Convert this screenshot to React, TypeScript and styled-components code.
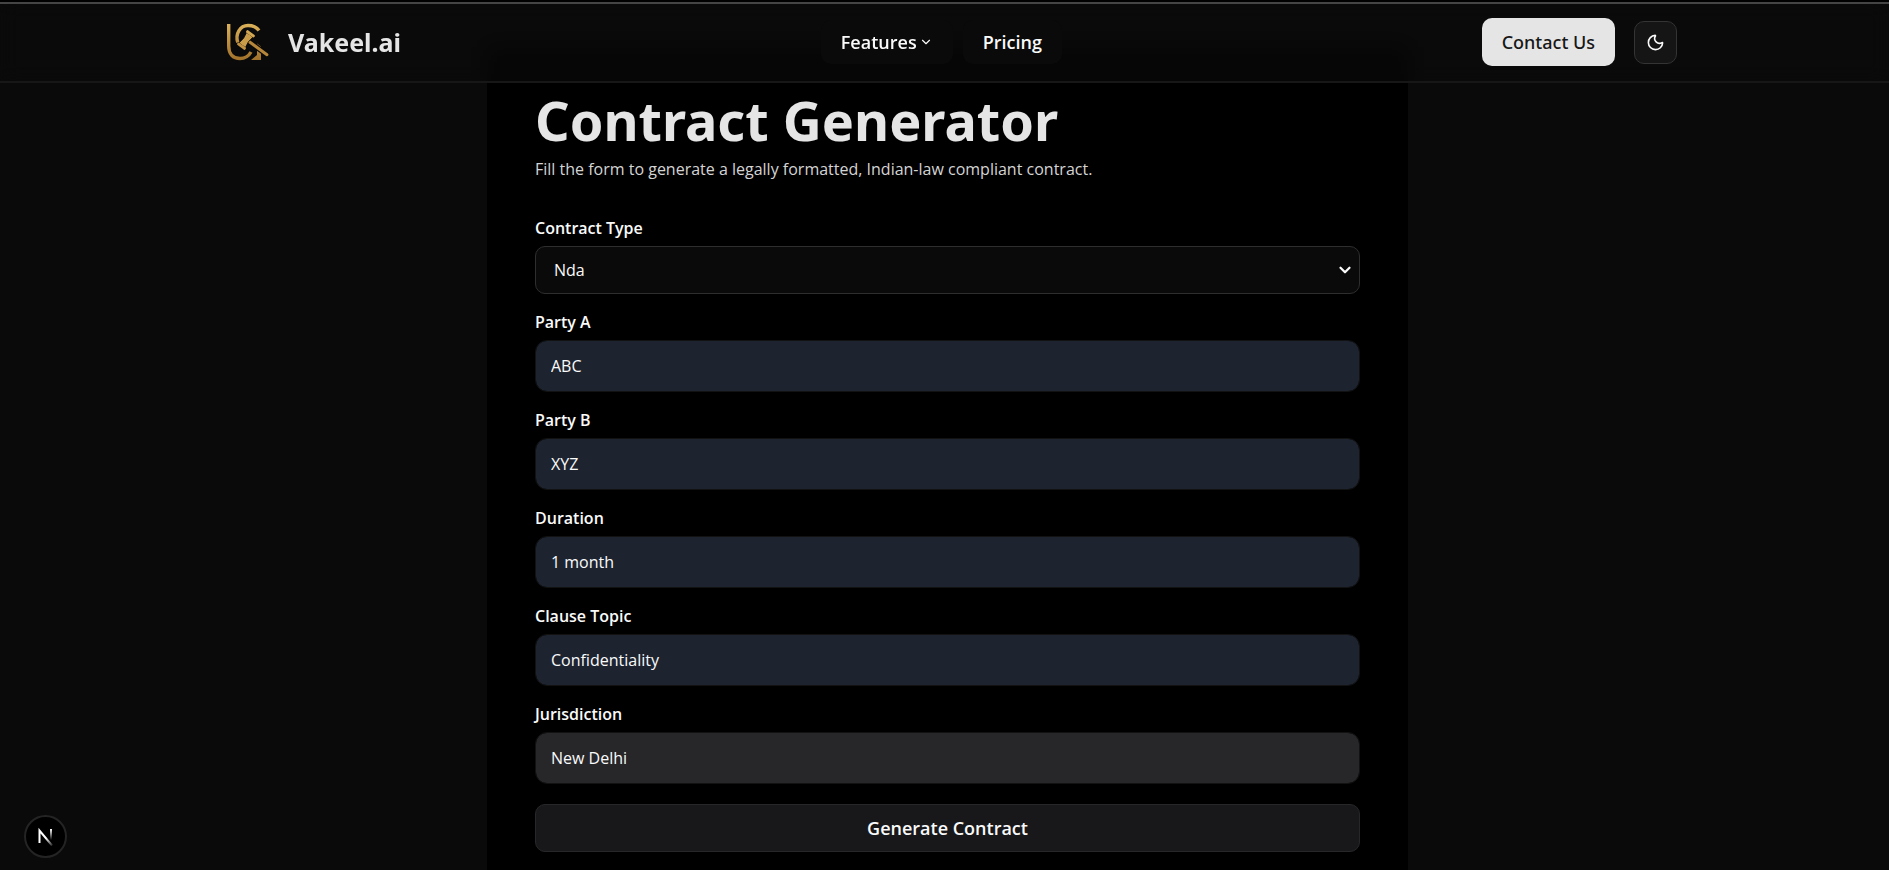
import React from 'react';
import styled, { createGlobalStyle } from 'styled-components';
import { ChevronDown, Moon } from 'lucide-react';

const GlobalStyle = createGlobalStyle`
  *, *::before, *::after { box-sizing: border-box; }
  body {
    margin: 0;
    background: #0a0a0a;
    color: #fafafa;
    font-family: "Open Sans", "Noto Sans", sans-serif;
    font-size: 16px;
    line-height: 24px;
  }
  button, input, select { font: inherit; color: inherit; }
`;

const Page = styled.div`
  display: flex;
  flex-direction: column;
  min-height: 100vh;
`;

const Header = styled.header`
  position: sticky;
  top: 0;
  z-index: 10;
  border-top: 2px solid #000;
  border-bottom: 2px solid #171717;
  background: rgba(10, 10, 10, 0.6);
  backdrop-filter: blur(10px);
`;

const HeaderInner = styled.div`
  display: flex;
  align-items: center;
  justify-content: space-between;
  height: 79px;
  padding: 0 212px 1px 218px;
  border-top: 2px solid #444;
`;

const Brand = styled.a`
  display: flex;
  align-items: center;
  gap: 10px;
  color: #e5e5e5;
  font-family: "Noto Sans", sans-serif;
  font-size: 25px;
  font-weight: 700;
  line-height: 32px;
  text-decoration: none;
`;

const Nav = styled.nav`
  display: flex;
  gap: 10px;
`;

const NavButton = styled.button`
  display: flex;
  align-items: center;
  gap: 2px;
  height: 44px;
  padding: 0 20px;
  border: 0;
  border-radius: 10px;
  background: #0a0a0a;
  font-size: 18px;
  font-weight: 600;
`;

const Actions = styled.div`
  display: flex;
  align-items: center;
  gap: 19px;
`;

const ContactButton = styled.button`
  height: 48px;
  padding: 0 20px;
  border: 0;
  border-radius: 10px;
  background: #e5e5e5;
  color: #171717;
  font-family: "Noto Sans", sans-serif;
  font-size: 18px;
  font-weight: 500;
`;

const ThemeButton = styled.button`
  display: grid;
  place-items: center;
  width: 43px;
  height: 43px;
  padding: 0;
  border: 1px solid #343434;
  border-radius: 10px;
  background: #151515;
`;

const Main = styled.main`
  display: flex;
  flex: 1;
  justify-content: center;
  margin-top: -36px;
  padding-left: 6px;
`;

const Card = styled.section`
  width: 100%;
  max-width: 921px;
  padding: 43px 48px 16px;
  background: #000;
`;

const Title = styled.h1`
  margin: 0;
  color: #e5e5e5;
  font-family: "Noto Sans", sans-serif;
  font-size: 54px;
  font-weight: 700;
  line-height: 60px;
`;

const Subtitle = styled.p`
  margin: 7px 0 35px;
  color: #d4d4d4;
`;

const Form = styled.form`
  display: flex;
  flex-direction: column;
  gap: 16px;
`;

const Field = styled.div`
  display: flex;
  flex-direction: column;
`;

const Label = styled.label`
  padding-bottom: 6px;
  font-weight: 600;
`;

const SelectWrap = styled.div`
  display: grid;
  align-items: center;

  > * { grid-area: 1 / 1; }
  svg { justify-self: end; margin-right: 6px; pointer-events: none; }
`;

const Select = styled.select`
  width: 100%;
  height: 48px;
  padding: 0 18px;
  border: 1px solid #2e2e2e;
  border-radius: 10px;
  background: #0a0a0a;
  appearance: none;
`;

const Input = styled.input<{ $autofilled?: boolean }>`
  width: 100%;
  height: 52px;
  padding: 0 15px;
  border: 1px solid #121213;
  border-radius: 12px;
  background: ${(p) => (p.$autofilled ? '#1d2430' : '#27272a')};
  background-clip: padding-box;
`;

const Submit = styled.button`
  height: 48px;
  margin-top: 4px;
  border: 1px solid #27272a;
  border-radius: 10px;
  background: #18181b;
  font-size: 18px;
  font-weight: 600;
`;

const DevBadge = styled.button`
  position: fixed;
  left: 24px;
  bottom: 12px;
  z-index: 20;
  display: grid;
  place-items: center;
  width: 43px;
  height: 43px;
  padding: 0;
  border: 2px solid #242424;
  border-radius: 50%;
  background: #000;
`;

function Logo() {
  return (
    <svg width="60" height="54" viewBox="-2 0 60 54" fill="none" aria-hidden="true">
      <defs>
        <linearGradient id="gold" x1="0" y1="8" x2="0" y2="46" gradientUnits="userSpaceOnUse">
          <stop offset="0" stopColor="#dcb45c" />
          <stop offset="0.5" stopColor="#bd8e3e" />
          <stop offset="1" stopColor="#a0702a" />
        </linearGradient>
      </defs>
      <g stroke="url(#gold)" strokeWidth="3.4">
        <path d="M8.700 9v22c0 8 4.300 12.500 11.300 12.500 5 0 8.500-2 11-6.500" />
        <path d="M17.800 27.500C15 19 20 10.500 28 10.500c5 0 8.500 1.500 11 5" />
      </g>
      <path d="M31 45l6-5V28.500l4 3V45z" fill="url(#gold)" />
      <path d="M29 26.500L47.500 40" stroke="#0a0a0a" strokeWidth="5.600" />
      <path d="M29 26.500L47 39.700" stroke="#b5853a" strokeWidth="3" strokeLinecap="round" />
      <g transform="translate(26 25) rotate(36)">
        <path d="M-4 -6.500H4L3 0L4 6.500H-4L-3 0z" fill="#c99c4a" stroke="#0a0a0a" strokeWidth="0.800" />
        <rect x="-5" y="-9" width="10" height="2.800" rx="1" fill="#d3a852" />
        <rect x="-5" y="6.200" width="10" height="2.800" rx="1" fill="#c09043" />
      </g>
    </svg>
  );
}

function NextMark() {
  return (
    <svg width="17" height="19" viewBox="0 0 17 19" fill="none" aria-hidden="true">
      <defs>
        <linearGradient id="stem" x1="0" y1="2" x2="0" y2="13" gradientUnits="userSpaceOnUse">
          <stop stopColor="#fff" />
          <stop offset="1" stopColor="#fff" stopOpacity="0" />
        </linearGradient>
        <linearGradient id="diag" x1="9" y1="11" x2="15" y2="18" gradientUnits="userSpaceOnUse">
          <stop stopColor="#fff" />
          <stop offset="1" stopColor="#fff" stopOpacity="0.200" />
        </linearGradient>
      </defs>
      <path d="M2.500 16V3.500L15 18.500" stroke="url(#diag)" strokeWidth="2" />
      <path d="M14 2v11" stroke="url(#stem)" strokeWidth="2" />
    </svg>
  );
}

const textFields = [
  { id: 'party-a', label: 'Party A', value: 'ABC', autofilled: true },
  { id: 'party-b', label: 'Party B', value: 'XYZ', autofilled: true },
  { id: 'duration', label: 'Duration', value: '1 month', autofilled: true },
  { id: 'clause-topic', label: 'Clause Topic', value: 'Confidentiality', autofilled: true },
  { id: 'jurisdiction', label: 'Jurisdiction', value: 'New Delhi', autofilled: false },
];

export default function App() {
  return (
    <Page>
      <GlobalStyle />
      <Header>
        <HeaderInner>
          <Brand href="#">
            <Logo />
            Vakeel.ai
          </Brand>
          <Nav>
            <NavButton type="button">
              Features
              <ChevronDown size={14} />
            </NavButton>
            <NavButton type="button">Pricing</NavButton>
          </Nav>
          <Actions>
            <ContactButton type="button">Contact Us</ContactButton>
            <ThemeButton type="button" aria-label="Toggle theme">
              <Moon size={19} />
            </ThemeButton>
          </Actions>
        </HeaderInner>
      </Header>
      <Main>
        <Card>
          <Title>Contract Generator</Title>
          <Subtitle>Fill the form to generate a legally formatted, Indian-law compliant contract.</Subtitle>
          <Form onSubmit={(e) => e.preventDefault()}>
            <Field>
              <Label htmlFor="contract-type">Contract Type</Label>
              <SelectWrap>
                <Select id="contract-type" defaultValue="nda">
                  <option value="nda">Nda</option>
                </Select>
                <ChevronDown size={18} strokeWidth={3} />
              </SelectWrap>
            </Field>
            {textFields.map((f) => (
              <Field key={f.id}>
                <Label htmlFor={f.id}>{f.label}</Label>
                <Input id={f.id} type="text" defaultValue={f.value} $autofilled={f.autofilled} />
              </Field>
            ))}
            <Submit type="submit">Generate Contract</Submit>
          </Form>
        </Card>
      </Main>
      <DevBadge type="button" aria-label="Open developer tools">
        <NextMark />
      </DevBadge>
    </Page>
  );
}
